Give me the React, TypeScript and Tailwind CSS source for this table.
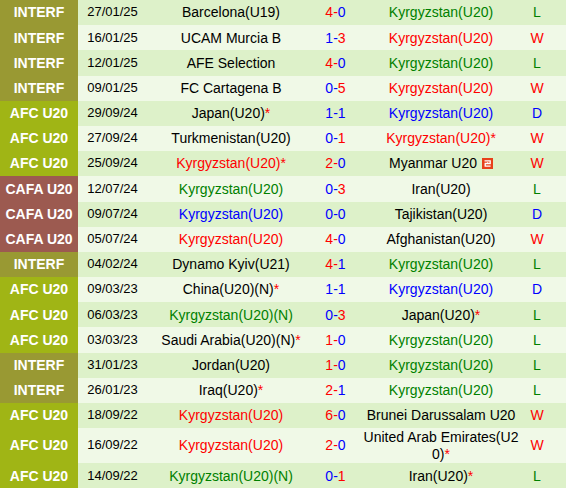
type Row = {
  comp: 'INTERF' | 'AFC U20' | 'CAFA U20';
  date: string;
  home: string;
  homeColor?: string;
  homeStar?: boolean;
  homeIcon?: boolean;
  score: [number, number];
  away: string;
  awayColor?: string;
  awayStar?: boolean;
  awayIcon?: boolean;
  result: 'W' | 'L' | 'D';
};

const K = 'Kyrgyzstan(U20)';

const rows: Row[] = [
  { comp: 'INTERF', date: '27/01/25', home: 'Barcelona(U19)', score: [4, 0], away: K, awayColor: 'text-[#008000]', result: 'L' },
  { comp: 'INTERF', date: '16/01/25', home: 'UCAM Murcia B', score: [1, 3], away: K, awayColor: 'text-[#ff0000]', result: 'W' },
  { comp: 'INTERF', date: '12/01/25', home: 'AFE Selection', score: [4, 0], away: K, awayColor: 'text-[#008000]', result: 'L' },
  { comp: 'INTERF', date: '09/01/25', home: 'FC Cartagena B', score: [0, 5], away: K, awayColor: 'text-[#ff0000]', result: 'W' },
  { comp: 'AFC U20', date: '29/09/24', home: 'Japan(U20)', homeStar: true, score: [1, 1], away: K, awayColor: 'text-[#0000ff]', result: 'D' },
  { comp: 'AFC U20', date: '27/09/24', home: 'Turkmenistan(U20)', score: [0, 1], away: K, awayColor: 'text-[#ff0000]', awayStar: true, result: 'W' },
  { comp: 'AFC U20', date: '25/09/24', home: K, homeColor: 'text-[#ff0000]', homeStar: true, score: [2, 0], away: 'Myanmar U20', awayIcon: true, result: 'W' },
  { comp: 'CAFA U20', date: '12/07/24', home: K, homeColor: 'text-[#008000]', score: [0, 3], away: 'Iran(U20)', result: 'L' },
  { comp: 'CAFA U20', date: '09/07/24', home: K, homeColor: 'text-[#0000ff]', score: [0, 0], away: 'Tajikistan(U20)', result: 'D' },
  { comp: 'CAFA U20', date: '05/07/24', home: K, homeColor: 'text-[#ff0000]', score: [4, 0], away: 'Afghanistan(U20)', result: 'W' },
  { comp: 'INTERF', date: '04/02/24', home: 'Dynamo Kyiv(U21)', score: [4, 1], away: K, awayColor: 'text-[#008000]', result: 'L' },
  { comp: 'AFC U20', date: '09/03/23', home: 'China(U20)(N)', homeStar: true, score: [1, 1], away: K, awayColor: 'text-[#0000ff]', result: 'D' },
  { comp: 'AFC U20', date: '06/03/23', home: 'Kyrgyzstan(U20)(N)', homeColor: 'text-[#008000]', score: [0, 3], away: 'Japan(U20)', awayStar: true, result: 'L' },
  { comp: 'AFC U20', date: '03/03/23', home: 'Saudi Arabia(U20)(N)', homeStar: true, score: [1, 0], away: K, awayColor: 'text-[#008000]', result: 'L' },
  { comp: 'INTERF', date: '31/01/23', home: 'Jordan(U20)', score: [1, 0], away: K, awayColor: 'text-[#008000]', result: 'L' },
  { comp: 'INTERF', date: '26/01/23', home: 'Iraq(U20)', homeStar: true, score: [2, 1], away: K, awayColor: 'text-[#008000]', result: 'L' },
  { comp: 'AFC U20', date: '18/09/22', home: K, homeColor: 'text-[#ff0000]', score: [6, 0], away: 'Brunei Darussalam U20', result: 'W' },
  { comp: 'AFC U20', date: '16/09/22', home: K, homeColor: 'text-[#ff0000]', score: [2, 0], away: 'United Arab Emirates(U20)', awayStar: true, result: 'W' },
  { comp: 'AFC U20', date: '14/09/22', home: 'Kyrgyzstan(U20)(N)', homeColor: 'text-[#008000]', score: [0, 1], away: 'Iran(U20)', awayStar: true, result: 'L' },
];

const compBg = {
  INTERF: 'bg-[#999933]',
  'AFC U20': 'bg-[#a0b515]',
  'CAFA U20': 'bg-[#9c5a50]',
};

const resultColor = {
  W: 'text-[#ff0000]',
  L: 'text-[#008000]',
  D: 'text-[#0000ff]',
};

// small red-card style badge next to Myanmar
function RedCard() {
  return (
    <svg width="11" height="11" viewBox="0 0 11 11" className="inline-block ml-[5px] align-[-1px]">
      <rect x="0" y="0" width="11" height="11" fill="#e8401a" />
      <path d="M2.5 2.8H8.2V5.5H3.2V8.2H8.6" stroke="#fff" strokeWidth="1.3" fill="none" />
      <path d="M5.6 4.2V5.5" stroke="#fff" strokeWidth="1.1" />
    </svg>
  );
}

function Team({ name, color, star, icon }: { name: string; color?: string; star?: boolean; icon?: boolean }) {
  return (
    <span className={color ?? 'text-black'}>
      {name}
      {star && <span className="text-[#ff0000]">*</span>}
      {icon && <RedCard />}
    </span>
  );
}

function Score({ s }: { s: [number, number] }) {
  const [a, b] = s;
  const ca = a > b ? 'text-[#ff0000]' : 'text-[#0000ff]';
  const cb = b > a ? 'text-[#ff0000]' : 'text-[#0000ff]';
  return (
    <>
      <span className={ca}>{a}-</span>
      <span className={cb}>{b}</span>
    </>
  );
}

export default function App() {
  return (
    <div className="w-[566px] h-[490px] bg-white overflow-hidden font-['Liberation_Sans',Arial,sans-serif] text-[14px] leading-[16.5px]">
      {rows.map((r, i) => (
        <div
          key={i}
          className={`grid grid-cols-[78px_69px_168px_41px_170px_22px_1fr] min-h-[25.2px] ${
            i % 2 === 0 ? 'bg-[#ddf1c9]' : 'bg-[#f0f9e7]'
          }`}
        >
          <div className={`flex items-center justify-center font-bold text-white ${compBg[r.comp]}`}>{r.comp}</div>
          <div className="flex items-center justify-center text-[13px] text-black">{r.date}</div>
          <div className="flex items-center justify-center text-center px-[4px] py-[1px] break-all">
            <Team name={r.home} color={r.homeColor} star={r.homeStar} icon={r.homeIcon} />
          </div>
          <div className="flex items-center justify-center">
            <Score s={r.score} />
          </div>
          <div className="flex items-center justify-center text-center px-[5px] py-[1px] break-all">
            <Team name={r.away} color={r.awayColor} star={r.awayStar} icon={r.awayIcon} />
          </div>
          <div className={`flex items-center justify-center ${resultColor[r.result]}`}>{r.result}</div>
          <div />
        </div>
      ))}
    </div>
  );
}
